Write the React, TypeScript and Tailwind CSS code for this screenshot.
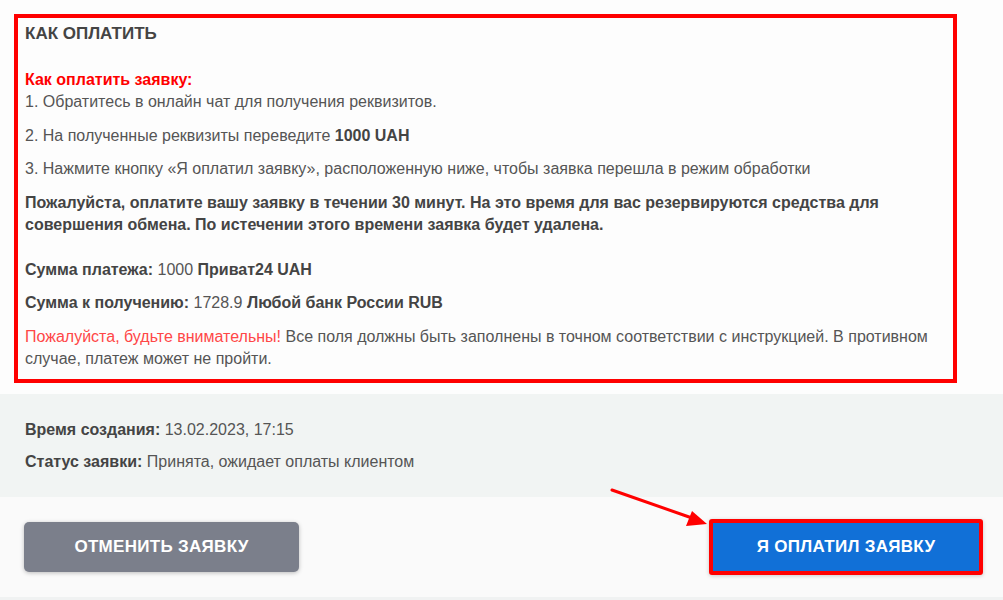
import React from 'react';

const font = { fontFamily: '"Liberation Sans", Arial, sans-serif' };

function Arrow() {
  return (
    <svg className="absolute left-[606px] top-[484px] pointer-events-none" width="110" height="48" viewBox="0 0 110 48">
      <line x1="6" y1="6" x2="86" y2="34" stroke="#ff0000" strokeWidth="3" strokeLinecap="round" />
      <polygon points="101,40 80,42 86,27" fill="#ff0000" />
    </svg>
  );
}

export default function App() {
  return (
    <div className="relative w-[1003px] h-[600px] bg-[#fdfdfd] text-[16px] leading-[22px] text-[#555]" style={font}>
      <div className="pt-[14px] pl-[14px] pr-[46px]">
        <div className="border-4 border-[#ff0000] pl-[7px] pr-[6px] pt-[5px] pb-[9px] bg-[#fdfdfd]">
          <h2 className="text-[17px] font-bold text-[#444]">КАК ОПЛАТИТЬ</h2>
          <p className="mt-[24px]">
            <span className="font-bold text-[#ff0000]">Как оплатить заявку:</span>
            <br />
            1. Обратитесь в онлайн чат для получения реквизитов.
          </p>
          <p className="mt-[12px]">
            2. На полученные реквизиты переведите <b className="text-[#444]">1000 UAH</b>
          </p>
          <p className="mt-[11px]">
            3. Нажмите кнопку «Я оплатил заявку», расположенную ниже, чтобы заявка перешла в режим обработки
          </p>
          <p className="mt-[12px] font-bold text-[#444]">
            Пожалуйста, оплатите вашу заявку в течении 30 минут. На это время для вас резервируются средства для совершения обмена. По истечении этого времени заявка будет удалена.
          </p>
          <p className="mt-[23px]">
            <b className="text-[#444]">Сумма платежа:</b> 1000 <b className="text-[#444]">Приват24 UAH</b>
          </p>
          <p className="mt-[11px]">
            <b className="text-[#444]">Сумма к получению:</b> 1728.9 <b className="text-[#444]">Любой банк России RUB</b>
          </p>
          <p className="mt-[12px]">
            <span className="text-[#ff4747]">Пожалуйста, будьте внимательны!</span> Все поля должны быть заполнены в точном соответствии с инструкцией. В противном случае, платеж может не пройти.
          </p>
        </div>
      </div>

      <div className="mt-[11px] bg-[#f1f4f3] pl-[25px] pt-[25px] pb-[24px]">
        <p>
          <b className="text-[#444]">Время создания:</b> 13.02.2023, 17:15
        </p>
        <p className="mt-[10px]">
          <b className="text-[#444]">Статус заявки:</b> Принята, ожидает оплаты клиентом
        </p>
      </div>

      <div className="bg-[#fafafa] h-[100px] flex items-center justify-between pl-[24px] pr-[20px]">
        <button className="w-[275px] h-[50px] rounded-[5px] bg-[#7b7f8b] text-white text-[17px] tracking-[0.3px] font-bold shadow-[0_1px_4px_rgba(0,0,0,0.25)]">
          ОТМЕНИТЬ ЗАЯВКУ
        </button>
        <button className="w-[274px] h-[56px] rounded-[3px] border-4 border-[#ff0000] bg-[#1170d7] text-white text-[17px] tracking-[0.3px] font-bold shadow-[0_1px_4px_rgba(0,0,0,0.2)]">
          Я ОПЛАТИЛ ЗАЯВКУ
        </button>
      </div>
      <div className="h-[3px] bg-[#f0f2f2]" />

      <Arrow />
    </div>
  );
}
